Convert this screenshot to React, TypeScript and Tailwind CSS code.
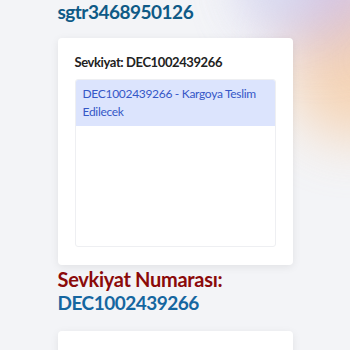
import React from 'react';

const shipmentNo = 'DEC1002439266';

const App: React.FC = () => {
  return (
    <div
      className="relative min-h-screen w-full overflow-hidden bg-[#f3f4f7]"
      style={{ fontFamily: "Lato, 'Noto Sans', sans-serif" }}
    >
      {/* soft glow in the corner */}
      <div className="pointer-events-none absolute -right-[70px] -top-[20px] h-[160px] w-[130px] rounded-full bg-[#f6c79a] opacity-70 blur-[28px]" />
      <div className="pointer-events-none absolute -right-[40px] -top-[80px] h-[120px] w-[140px] rounded-full bg-[#c8b4e6] opacity-70 blur-[30px]" />
      <div className="pointer-events-none absolute right-[30px] -top-[60px] h-[80px] w-[80px] rounded-full bg-[#d6e2f4] opacity-70 blur-[25px]" />

      <div className="relative mx-auto flex w-[235px] flex-col">
        <h1 className="-mt-[3px] text-[19px] font-bold leading-[30px] tracking-[-0.5px] text-[#0f5a86]">sgtr3468950126</h1>

        <div className="mt-[11px] rounded-[4px] bg-white px-[17px] pb-[18px] pt-[14px] shadow-[0_2px_8px_rgba(0,0,0,0.08)]">
          <h2 className="text-[13px] font-bold leading-[20px] tracking-[-0.4px] text-[#222]">Sevkiyat: {shipmentNo}</h2>
          <div className="mt-[7px] h-[168px] rounded-[3px] border border-[#eeeff2] bg-white">
            <div className="rounded-t-[2px] bg-[#dce4fd] px-[7px] py-[5px] text-[12px] leading-[18px] tracking-[-0.3px] text-[#3557c7]">
              {shipmentNo} - Kargoya Teslim Edilecek
            </div>
          </div>
        </div>

        <h2 className="mt-[2px] text-[20px] font-bold leading-[24px] tracking-[-0.3px] text-[#8b0a0a]">Sevkiyat Numarası:</h2>
        <p className="text-[19px] font-bold leading-[24px] tracking-[-0.5px] text-[#1566a0]">{shipmentNo}</p>

        <div className="mt-[16px] h-[40px] rounded-[4px] bg-white shadow-[0_2px_8px_rgba(0,0,0,0.08)]" />
      </div>
    </div>
  );
};

export default App;
